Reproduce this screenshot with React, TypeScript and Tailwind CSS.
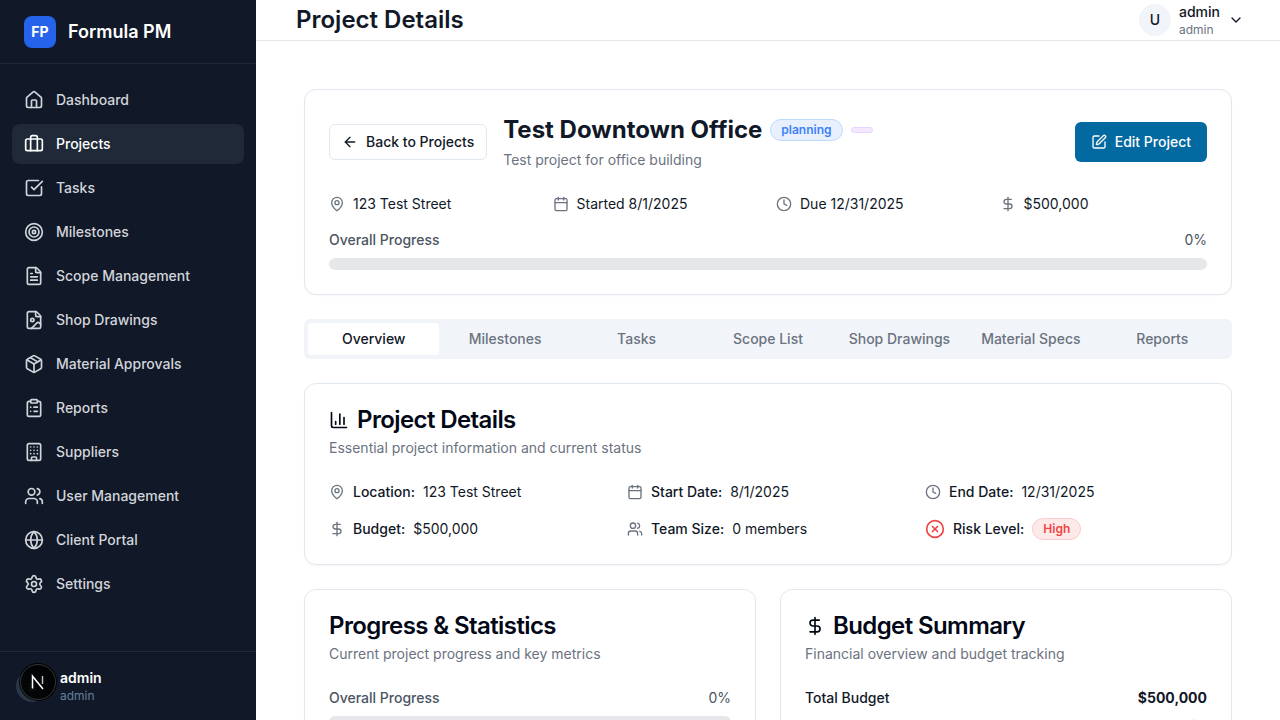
import {
  ArrowLeft,
  Briefcase,
  Building,
  Calendar,
  ChartColumn,
  ChevronDown,
  CircleX,
  ClipboardList,
  Clock,
  DollarSign,
  FileImage,
  FileText,
  Globe,
  House,
  MapPin,
  Package,
  Settings,
  SquareCheckBig,
  SquarePen,
  Target,
  Users,
} from "lucide-react";
import type { ReactNode } from "react";

const FONT = "[font-family:Inter,'Liberation_Sans',sans-serif]";
const CARD = "rounded-xl border border-[#e2e8f0] bg-white shadow-[0_1px_2px_rgba(0,0,0,0.04)]";

const navItems = [
  { label: "Dashboard", icon: House },
  { label: "Projects", icon: Briefcase, active: true },
  { label: "Tasks", icon: SquareCheckBig },
  { label: "Milestones", icon: Target },
  { label: "Scope Management", icon: FileText },
  { label: "Shop Drawings", icon: FileImage },
  { label: "Material Approvals", icon: Package },
  { label: "Reports", icon: ClipboardList },
  { label: "Suppliers", icon: Building },
  { label: "User Management", icon: Users },
  { label: "Client Portal", icon: Globe },
  { label: "Settings", icon: Settings },
];

const tabs = ["Overview", "Milestones", "Tasks", "Scope List", "Shop Drawings", "Material Specs", "Reports"];

function Sidebar() {
  return (
    <aside className="flex h-full w-64 shrink-0 flex-col bg-[#111827]">
      <div className="flex h-16 items-center gap-3 border-b border-[#1f2937] px-6">
        <div className="flex h-8 w-8 items-center justify-center rounded-lg bg-[#2563eb] text-sm font-bold text-white">FP</div>
        <span className="text-lg font-semibold text-white">Formula PM</span>
      </div>
      <nav className="flex flex-1 flex-col gap-1 px-3 py-4">
        {navItems.map(({ label, icon: Icon, active }) => (
          <div
            key={label}
            className={`flex h-10 items-center gap-3 rounded-lg px-3 text-sm font-medium ${
              active ? "bg-[#1f2937] text-white" : "text-[#d1d5db]"
            }`}
          >
            <Icon size={20} strokeWidth={2} />
            {label}
          </div>
        ))}
      </nav>
      <div className="relative flex h-[69px] items-center border-t border-[#1f2937] pl-[60px]">
        {/* avatar, mostly covered by the next dev badge */}
        <div className="absolute top-[18px] left-4 flex h-8 w-8 items-center justify-center rounded-full bg-[#2b3648] text-sm text-[#9ca3af]">a</div>
        <div className="absolute top-3 left-5 flex h-9 w-9 items-center justify-center rounded-full border border-[#333333] bg-black/90 shadow-[0_0_0_1px_#000]">
          <svg width="16" height="16" viewBox="0 0 16 16" fill="none">
            <path d="M2.5 14.5V2.2L13 15" stroke="white" strokeWidth="1.5" />
            <path d="M12.5 2V10" stroke="#bbbbbb" strokeWidth="1.5" />
          </svg>
        </div>
        <div>
          <div className="text-sm leading-[18px] font-semibold text-white">admin</div>
          <div className="mt-px text-xs leading-4 text-[#64809f]">admin</div>
        </div>
      </div>
    </aside>
  );
}

function Header() {
  return (
    <header className="flex h-[41px] shrink-0 items-center justify-between border-b border-[#e5e7eb] bg-white pr-9 pl-10">
      <h1 className="text-2xl font-semibold text-[#111827]">Project Details</h1>
      <div className="flex items-center">
        <div className="flex h-8 w-8 items-center justify-center rounded-full bg-[#f1f5f9] text-sm font-medium text-[#111827]">U</div>
        <div className="ml-2">
          <div className="text-sm leading-[18px] font-medium text-[#111827]">admin</div>
          <div className="mt-px text-xs leading-4 text-[#6b7280]">admin</div>
        </div>
        <ChevronDown size={16} className="ml-2 text-[#111827]" />
      </div>
    </header>
  );
}

function Meta({ icon, children }: { icon: ReactNode; children: ReactNode }) {
  return (
    <div className="flex items-center gap-2 text-sm text-[#111827]">
      <span className="flex w-4 justify-center text-[#6b7280]">{icon}</span>
      {children}
    </div>
  );
}

function Info({ icon, label, children }: { icon: ReactNode; label: string; children: ReactNode }) {
  return (
    <div className="flex items-center gap-2 text-sm text-[#111827]">
      <span className="flex w-4 justify-center text-[#6b7280]">{icon}</span>
      <span className="font-medium">{label}</span>
      {children}
    </div>
  );
}

function CardTitle({ title, subtitle, icon }: { title: string; subtitle: string; icon?: ReactNode }) {
  return (
    <div>
      <h2 className="flex h-8 items-center gap-2 text-2xl font-semibold tracking-[-0.6px] text-[#020817]">
        {icon}
        {title}
      </h2>
      <p className="mt-0.5 text-sm leading-5 text-[#6b7280]">{subtitle}</p>
    </div>
  );
}

export default function App() {
  return (
    <div className={`flex h-screen overflow-hidden bg-white ${FONT}`}>
      <Sidebar />
      <div className="flex min-w-0 flex-1 flex-col">
        <Header />
        <main className="flex-1 overflow-hidden px-12 pt-12">
          {/* project header card */}
          <section className={`${CARD} p-6`}>
            <div className="flex items-start justify-between pt-2">
              <div className="flex items-start gap-4">
                <button className="mt-[2px] flex h-9 items-center gap-2 rounded-md border border-[#e2e8f0] bg-white px-3 text-sm font-medium text-[#111827]">
                  <ArrowLeft size={16} />
                  Back to Projects
                </button>
                <div className="-mt-2">
                  <div className="flex items-center gap-2">
                    <span className="text-2xl font-bold text-[#111827]">Test Downtown Office</span>
                    <span className="rounded-full border border-[#bfdbfe] bg-[#e8f0fe] px-2.5 py-0.5 text-xs font-semibold text-[#3b82f6]">planning</span>
                    <span className="h-[6px] w-[22px] rounded-full border border-[#e9d5ff] bg-[#f3e8ff]" />
                  </div>
                  <p className="mt-1 text-sm leading-5 text-[#6b7280]">Test project for office building</p>
                </div>
              </div>
              <button className="flex h-10 items-center gap-2 rounded-md bg-[#0369a1] px-4 text-sm font-medium text-white">
                <SquarePen size={16} />
                Edit Project
              </button>
            </div>
            <div className="mt-6 grid grid-cols-4 gap-4">
              <Meta icon={<MapPin size={16} />}>123 Test Street</Meta>
              <Meta icon={<Calendar size={16} />}>Started 8/1/2025</Meta>
              <Meta icon={<Clock size={16} />}>Due 12/31/2025</Meta>
              <Meta icon={<DollarSign size={16} />}>$500,000</Meta>
            </div>
            <div className="mt-4 flex justify-between text-sm leading-5 font-medium text-[#4b5563]">
              <span>Overall Progress</span>
              <span className="font-normal">0%</span>
            </div>
            <div className="mt-2 h-3 rounded-full bg-[#e5e7eb]" />
          </section>

          {/* tabs */}
          <div className="mt-6 grid h-10 grid-cols-7 rounded-md bg-[#f1f5f9] p-1">
            {tabs.map((tab, i) => (
              <div
                key={tab}
                className={`flex items-center justify-center rounded-sm text-sm font-medium ${
                  i === 0 ? "bg-white text-[#111827]" : "text-[#6b7280]"
                }`}
              >
                {tab}
              </div>
            ))}
          </div>

          {/* details */}
          <section className={`${CARD} mt-6 h-[182px] p-6 pt-5`}>
            <CardTitle title="Project Details" subtitle="Essential project information and current status" icon={<ChartColumn size={20} />} />
            <div className="mt-6 grid grid-cols-3 gap-x-4 gap-y-4">
              <Info icon={<MapPin size={16} />} label="Location:">123 Test Street</Info>
              <Info icon={<Calendar size={16} />} label="Start Date:">8/1/2025</Info>
              <Info icon={<Clock size={16} />} label="End Date:">12/31/2025</Info>
              <Info icon={<DollarSign size={16} />} label="Budget:">$500,000</Info>
              <Info icon={<Users size={16} />} label="Team Size:">0 members</Info>
              <div className="flex items-center gap-2 text-sm text-[#111827]">
                <CircleX size={20} className="text-[#ef4444]" />
                <span className="font-medium">Risk Level:</span>
                <span className="rounded-full border border-[#fecaca] bg-[#fee9e9] px-2.5 py-0.5 text-xs font-semibold text-[#ef4444]">High</span>
              </div>
            </div>
          </section>

          {/* bottom cards */}
          <div className="mt-6 grid grid-cols-2 gap-6">
            <section className={`${CARD} h-[300px] p-6 pt-5`}>
              <CardTitle title="Progress & Statistics" subtitle="Current project progress and key metrics" />
              <div className="mt-6 flex justify-between text-sm leading-5 font-medium text-[#4b5563]">
                <span>Overall Progress</span>
                <span className="font-normal">0%</span>
              </div>
              <div className="mt-2 h-3 rounded-full bg-[#e5e7eb]" />
            </section>
            <section className={`${CARD} h-[300px] p-6 pt-5`}>
              <CardTitle title="Budget Summary" subtitle="Financial overview and budget tracking" icon={<DollarSign size={20} />} />
              <div className="mt-6 flex justify-between text-sm leading-5 text-[#111827]">
                <span className="font-medium">Total Budget</span>
                <span className="font-bold">$500,000</span>
              </div>
              {/* next row is cut by the window, only the top of its red amount shows */}
              <div className="mt-[9px] flex justify-end text-sm leading-5">
                <span className="font-semibold text-[#ef4444]">$0</span>
              </div>
            </section>
          </div>
        </main>
      </div>
    </div>
  );
}
